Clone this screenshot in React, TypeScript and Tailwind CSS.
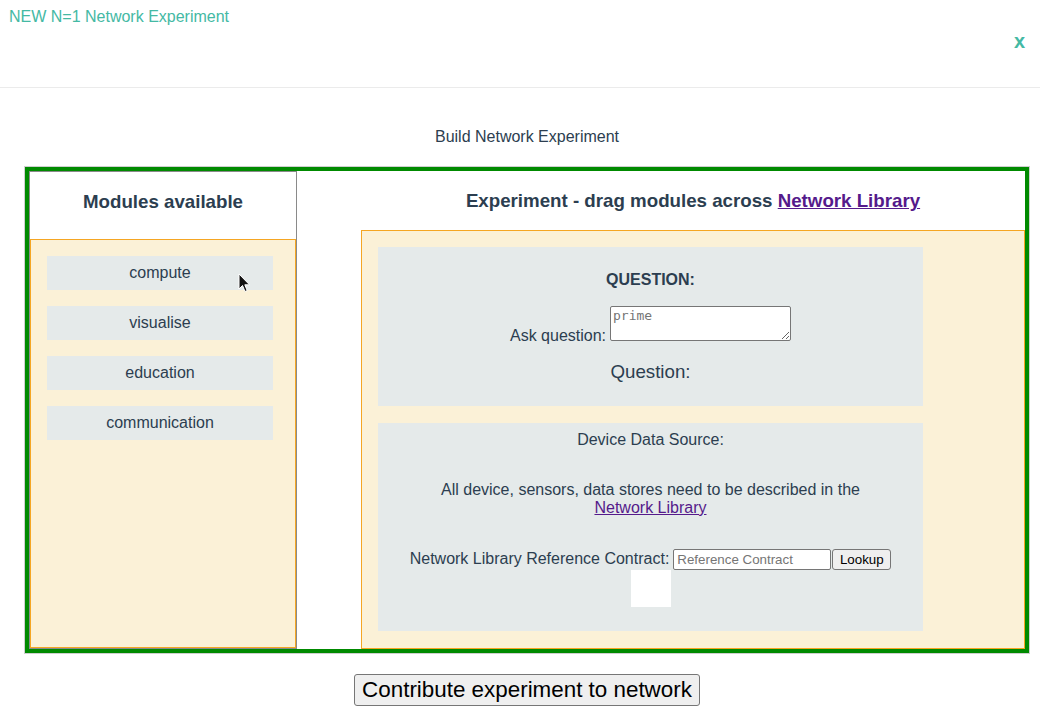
const modules = ["compute", "visualise", "education", "communication"];

function Cursor() {
  return (
    <svg
      className="pointer-events-none absolute left-[238px] top-[273px]"
      width="13"
      height="20"
      viewBox="0 0 13 20"
    >
      <path
        d="M1 1 L1 16 L4.5 12.5 L7 18.5 L9.2 17.6 L6.8 11.8 L11.5 11.8 Z"
        fill="#111"
        stroke="#fff"
        strokeWidth="1"
        strokeLinejoin="round"
      />
    </svg>
  );
}

export default function App() {
  return (
    <div className="relative min-h-screen bg-white font-['Liberation_Sans',Arial,sans-serif] text-[#2c3e50]">
      <header className="flex h-[88px] items-start justify-between border-b border-[#ebebeb] pl-[9px] pr-[15px]">
        <p className="mt-[8px] text-[16px] leading-[18px] text-[#44b9a4]">
          NEW N=1 Network Experiment
        </p>
        <button className="mt-[29px] text-[20px] font-bold leading-[24px] text-[#44b9a4]">
          x
        </button>
      </header>

      <main className="ml-[24px] w-[1006px]">
        <h2 className="mt-[40px] text-center text-[16px] leading-[18px]">
          Build Network Experiment
        </h2>

        <div className="mt-[20px] border border-[#cfcfcf]">
          <div className="flex h-[486px] border-4 border-[#008a00]">
            {/* Modules column */}
            <div className="flex w-[268px] flex-col border border-[#8a8a8a]">
              <div className="flex h-[67px] items-center justify-center pb-[6px] text-[18.72px] font-bold">
                Modules available
              </div>
              <ul className="flex flex-1 flex-col gap-[16px] border border-[#f5a623] bg-[#fbf1d7] pl-[16px] pt-[16px]">
                {modules.map((m) => (
                  <li
                    key={m}
                    className="h-[34px] w-[226px] bg-[#e5eaea] text-center text-[16px] leading-[34px]"
                  >
                    {m}
                  </li>
                ))}
              </ul>
            </div>

            {/* Experiment column */}
            <div className="flex flex-1 flex-col pl-[64px]">
              <div className="flex h-[59px] items-center justify-center pt-[2px] text-[18.72px] font-bold">
                Experiment - drag modules across&nbsp;
                <a href="#" className="text-[#551a8b] underline">
                  Network Library
                </a>
              </div>
              <div className="flex flex-1 flex-col gap-[17px] border border-[#f5a623] bg-[#fbf1d7] p-[16px]">
                <div className="flex h-[159px] w-[545px] flex-col items-center bg-[#e5eaea] pt-[24px]">
                  <h4 className="text-[16px] font-bold leading-[18px]">QUESTION:</h4>
                  <div className="mt-[17px] flex items-end">
                    <label className="mr-[4px] text-[16px] leading-[18px]">Ask question:</label>
                    <textarea
                      placeholder="prime"
                      className="mb-[4px] h-[35px] w-[181px] rounded-[2px] border border-[#767676] bg-white px-[2px] py-[1px] font-['DejaVu_Sans_Mono',monospace] text-[13px] leading-[16px] placeholder:text-[#757575]"
                    />
                  </div>
                  <h3 className="mt-[16px] text-[18.72px] leading-[22px]">Question:</h3>
                </div>

                <div className="flex h-[208px] w-[545px] flex-col items-center bg-[#e5eaea] pt-[8px] text-center text-[16px] leading-[18px]">
                  <p>Device Data Source:</p>
                  <p className="mt-[32px]">
                    All device, sensors, data stores need to be described in the
                    <br />
                    <a href="#" className="text-[#551a8b] underline">
                      Network Library
                    </a>
                  </p>
                  <div className="mt-[32px] flex items-center">
                    <span className="mr-[4px] pb-[2px]">Network Library Reference Contract:</span>
                    <input
                      placeholder="Reference Contract"
                      className="h-[21px] w-[158px] rounded-[2px] border border-[#767676] bg-white px-[3px] text-[13.33px] text-black placeholder:text-[#757575]"
                    />
                    <button className="ml-[1px] h-[21px] w-[59px] rounded-[3px] border border-[#767676] bg-[#efefef] text-[13.33px] text-black">
                      Lookup
                    </button>
                  </div>
                  <div className="h-[37px] w-[40px] bg-white" />
                </div>
              </div>
            </div>
          </div>
        </div>

        <div className="mt-[20px] flex justify-center">
          <button className="h-[32px] rounded-[3px] border border-[#767676] bg-[#efefef] px-[7px] text-[22.4px] leading-[26px] text-black">
            Contribute experiment to network
          </button>
        </div>
      </main>

      <Cursor />
    </div>
  );
}
